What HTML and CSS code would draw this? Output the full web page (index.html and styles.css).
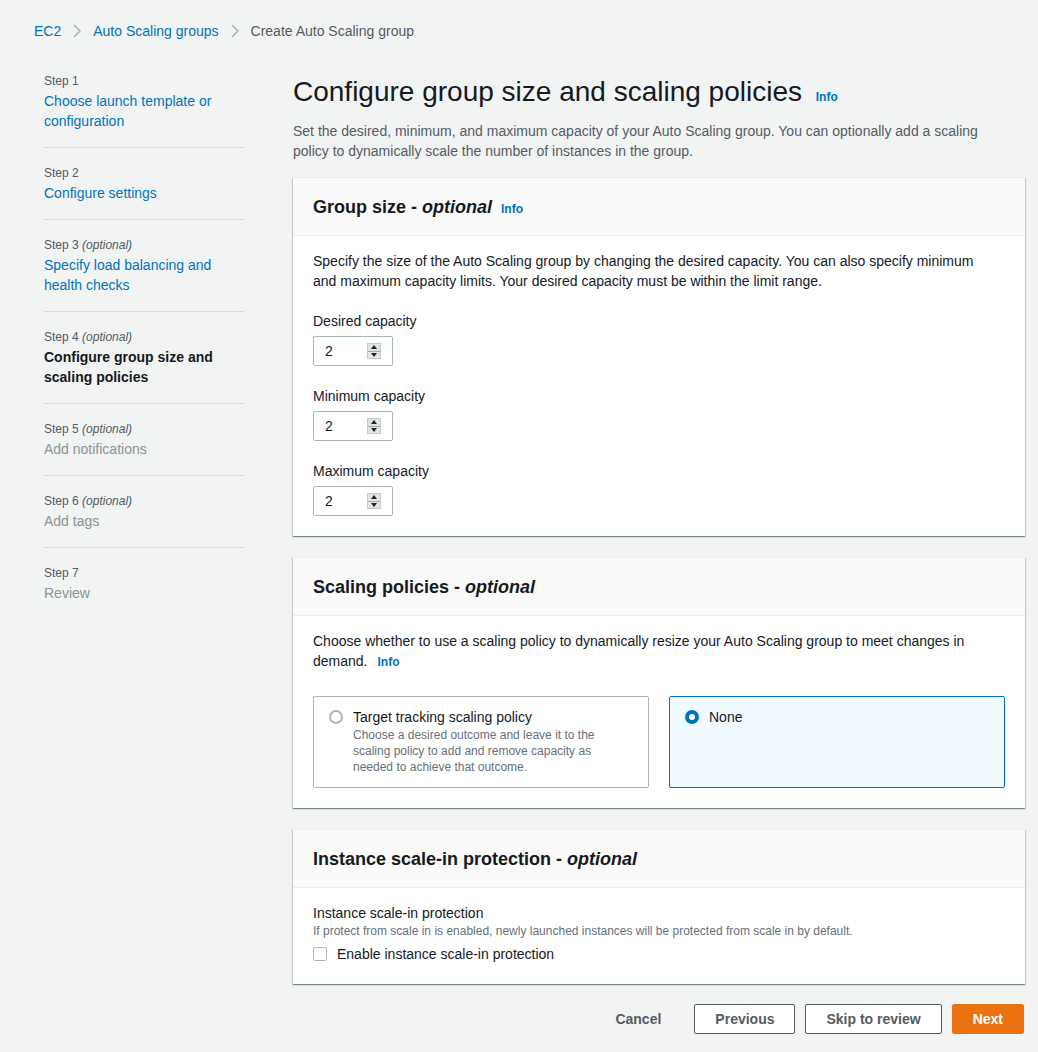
FILE: index.html
```html
<!DOCTYPE html>
<html lang="en">
<head>
    <meta charset="UTF-8">
    <title>Create Auto Scaling group</title>
    <link rel="stylesheet" href="styles.css">
</head>
<body>
    <div class="page">
        <!-- Breadcrumbs -->
        <nav class="crumbs">
            <a href="#">EC2</a>
            <svg class="chev" width="10" height="14" viewBox="0 0 10 14"><path d="M2 1l6 6-6 6" fill="none" stroke="#aab7b8" stroke-width="1.6"/></svg>
            <a href="#">Auto Scaling groups</a>
            <svg class="chev" width="10" height="14" viewBox="0 0 10 14"><path d="M2 1l6 6-6 6" fill="none" stroke="#aab7b8" stroke-width="1.6"/></svg>
            <span class="current">Create Auto Scaling group</span>
        </nav>

        <div class="layout">
            <!-- Wizard steps -->
            <ul class="steps">
                <li>
                    <div class="step-no">Step 1</div>
                    <a href="#" class="step-link">Choose launch template or configuration</a>
                </li>
                <li>
                    <div class="step-no">Step 2</div>
                    <a href="#" class="step-link">Configure settings</a>
                </li>
                <li>
                    <div class="step-no">Step 3 <em>(optional)</em></div>
                    <a href="#" class="step-link">Specify load balancing and health checks</a>
                </li>
                <li>
                    <div class="step-no">Step 4 <em>(optional)</em></div>
                    <span class="step-link active">Configure group size and scaling policies</span>
                </li>
                <li>
                    <div class="step-no">Step 5 <em>(optional)</em></div>
                    <span class="step-link disabled">Add notifications</span>
                </li>
                <li>
                    <div class="step-no">Step 6 <em>(optional)</em></div>
                    <span class="step-link disabled">Add tags</span>
                </li>
                <li>
                    <div class="step-no">Step 7</div>
                    <span class="step-link disabled">Review</span>
                </li>
            </ul>

            <!-- Main form -->
            <main class="main">
                <h1 class="title">Configure group size and scaling policies <a href="#" class="info">Info</a></h1>
                <p class="lead">Set the desired, minimum, and maximum capacity of your Auto Scaling group. You can optionally add a scaling policy to dynamically scale the number of instances in the group.</p>

                <section class="panel">
                    <div class="panel-head">
                        <h2>Group size - <em>optional</em> <a href="#" class="info">Info</a></h2>
                    </div>
                    <div class="panel-body">
                        <p class="narrow">Specify the size of the Auto Scaling group by changing the desired capacity. You can also specify minimum and maximum capacity limits. Your desired capacity must be within the limit range.</p>

                        <div class="field">
                            <label for="desired">Desired capacity</label>
                            <div class="num">
                                <input type="text" id="desired" value="2">
                                <span class="spin"><span class="up"></span><span class="down"></span></span>
                            </div>
                        </div>
                        <div class="field">
                            <label for="minimum">Minimum capacity</label>
                            <div class="num">
                                <input type="text" id="minimum" value="2">
                                <span class="spin"><span class="up"></span><span class="down"></span></span>
                            </div>
                        </div>
                        <div class="field">
                            <label for="maximum">Maximum capacity</label>
                            <div class="num">
                                <input type="text" id="maximum" value="2">
                                <span class="spin"><span class="up"></span><span class="down"></span></span>
                            </div>
                        </div>
                    </div>
                </section>

                <section class="panel">
                    <div class="panel-head">
                        <h2>Scaling policies - <em>optional</em></h2>
                    </div>
                    <div class="panel-body">
                        <p class="wrap-text">Choose whether to use a scaling policy to dynamically resize your Auto Scaling group to meet changes in demand.<a href="#" class="info">Info</a></p>

                        <div class="tiles">
                            <label class="tile">
                                <span class="radio"></span>
                                <span class="tile-text">
                                    <span class="tile-title">Target tracking scaling policy</span>
                                    <span class="tile-desc">Choose a desired outcome and leave it to the scaling policy to add and remove capacity as needed to achieve that outcome.</span>
                                </span>
                            </label>
                            <label class="tile selected">
                                <span class="radio"></span>
                                <span class="tile-text">
                                    <span class="tile-title">None</span>
                                </span>
                            </label>
                        </div>
                    </div>
                </section>

                <section class="panel">
                    <div class="panel-head">
                        <h2>Instance scale-in protection - <em>optional</em></h2>
                    </div>
                    <div class="panel-body">
                        <div class="field-title">Instance scale-in protection</div>
                        <div class="field-desc">If protect from scale in is enabled, newly launched instances will be protected from scale in by default.</div>
                        <label class="check">
                            <span class="box"></span>
                            Enable instance scale-in protection
                        </label>
                    </div>
                </section>

                <div class="actions">
                    <button class="btn link">Cancel</button>
                    <button class="btn">Previous</button>
                    <button class="btn">Skip to review</button>
                    <button class="btn primary">Next</button>
                </div>
            </main>
        </div>
    </div>
</body>
</html>
```

FILE: styles.css
```css
/* Page base */
body {
    margin: 0;
    background: #f2f3f3;
    font-family: "Liberation Sans", Arial, sans-serif;
    font-size: 14px;
    line-height: 20px;
    color: #16191f;
}

a {
    color: #0073bb;
    text-decoration: none;
}

.page {
    padding: 21px 13px 10px 34px;
}

/* Breadcrumbs */
.crumbs {
    display: flex;
    align-items: center;
    gap: 11px;
}

.crumbs .current {
    color: #545b64;
}

.chev {
    display: block;
}

/* Two column layout */
.layout {
    display: grid;
    grid-template-columns: 210px 1fr;
    column-gap: 49px;
    margin-top: 32px;
}

/* Wizard steps */
.steps {
    list-style: none;
    margin: 0 0 0 10px;
    padding: 0;
}

.steps li {
    padding: 17px 0 16px;
    border-bottom: 1px solid #d5dbdb;
}

.steps li:first-child {
    padding-top: 0;
}

.steps li:last-child {
    border-bottom: none;
}

.step-no {
    font-size: 12px;
    line-height: 16px;
    color: #545b64;
    margin-bottom: 2px;
}

.step-link {
    display: block;
}

.step-link.active {
    font-weight: bold;
    color: #16191f;
}

.step-link.disabled {
    color: #879596;
}

/* Main column */
.main {
    min-width: 0;
}

.title {
    margin: 1px 0 0;
    font-size: 28px;
    line-height: 36px;
    font-weight: normal;
}

.info {
    font-size: 12px;
    line-height: 1;
    font-weight: bold;
    margin-left: 6px;
}

.title .info {
    margin-left: 6px;
}

.lead {
    margin: 11px 0 16px;
    max-width: 712px;
    color: #545b64;
}

/* Panels */
.panel {
    background: #fff;
    border-top: 1px solid #eaeded;
    box-shadow: 0 1px 1px 0 rgba(0, 28, 36, 0.3), 1px 1px 1px 0 rgba(0, 28, 36, 0.15), -1px 1px 1px 0 rgba(0, 28, 36, 0.15);
    margin-bottom: 21px;
}

.panel-head {
    background: #fafafa;
    padding: 18px 20px 17px;
    border-bottom: 1px solid #eaeded;
}

.panel-head h2 {
    margin: 0;
    font-size: 18px;
    line-height: 22px;
    font-weight: bold;
}

.panel-head .info {
    margin-left: 4px;
}

.panel-body {
    padding: 15px 20px 20px;
}

.panel-body p {
    margin: 0;
}

.panel-body .narrow {
    max-width: 680px;
}

.wrap-text .info {
    margin-left: 10px;
}

/* Number inputs */
.field {
    margin-top: 20px;
}

.field label {
    display: block;
}

.num {
    display: flex;
    align-items: center;
    width: 80px;
    height: 30px;
    margin-top: 5px;
    box-sizing: border-box;
    border: 1px solid #aab7b8;
    border-radius: 2px;
    background: #fff;
}

.num input {
    width: 40px;
    border: none;
    outline: none;
    padding: 0 0 0 11px;
    font: inherit;
    color: #16191f;
    background: transparent;
}

.spin {
    display: flex;
    flex-direction: column;
    margin-left: auto;
    margin-right: 11px;
    width: 14px;
    height: 16px;
    background: #e1e3e4;
    border: 1px solid #c6cbcc;
    box-sizing: border-box;
}

.spin span {
    flex: 1;
    display: flex;
    align-items: center;
    justify-content: center;
}

.spin .up {
    border-bottom: 1px solid #a3aaae;
}

.spin .up::after {
    content: "";
    border-left: 3px solid transparent;
    border-right: 3px solid transparent;
    border-bottom: 4px solid #222;
}

.spin .down::after {
    content: "";
    border-left: 3px solid transparent;
    border-right: 3px solid transparent;
    border-top: 4px solid #222;
}

/* Radio tiles */
.tiles {
    display: grid;
    grid-template-columns: 1fr 1fr;
    gap: 20px;
    margin-top: 25px;
}

.tile {
    display: flex;
    gap: 10px;
    padding: 10px 15px 12px;
    border: 1px solid #aab7b8;
    border-radius: 2px;
    background: #fff;
}

.tile.selected {
    border-color: #0073bb;
    background: #f1faff;
}

.radio {
    flex: none;
    width: 14px;
    height: 14px;
    margin-top: 3px;
    box-sizing: border-box;
    border: 2px solid #aab7b8;
    border-radius: 50%;
    background: #fff;
}

.tile.selected .radio {
    border: 4px solid #0073bb;
}

.tile-text {
    display: flex;
    flex-direction: column;
    max-width: 260px;
}

.tile-desc {
    font-size: 12px;
    line-height: 16px;
    color: #687078;
}

/* Checkbox */
.field-desc {
    font-size: 12px;
    line-height: 16px;
    color: #687078;
}

.check {
    display: flex;
    align-items: center;
    gap: 10px;
    margin-top: 5px;
}

.check .box {
    width: 14px;
    height: 14px;
    box-sizing: border-box;
    border: 1px solid #aab7b8;
    border-radius: 2px;
    background: #fff;
}

/* Footer buttons */
.actions {
    display: flex;
    justify-content: flex-end;
    gap: 10px;
    margin-top: -1px;
    margin-right: 1px;
}

.btn {
    font: inherit;
    font-weight: bold;
    line-height: 20px;
    padding: 4px 20px;
    border: 1px solid #545b64;
    border-radius: 2px;
    background: #fff;
    color: #545b64;
    cursor: pointer;
}

.btn.link {
    border-color: transparent;
    background: transparent;
    margin-right: 2px;
}

.btn.primary {
    background: #ec7211;
    border-color: #ec7211;
    color: #fff;
}
```
